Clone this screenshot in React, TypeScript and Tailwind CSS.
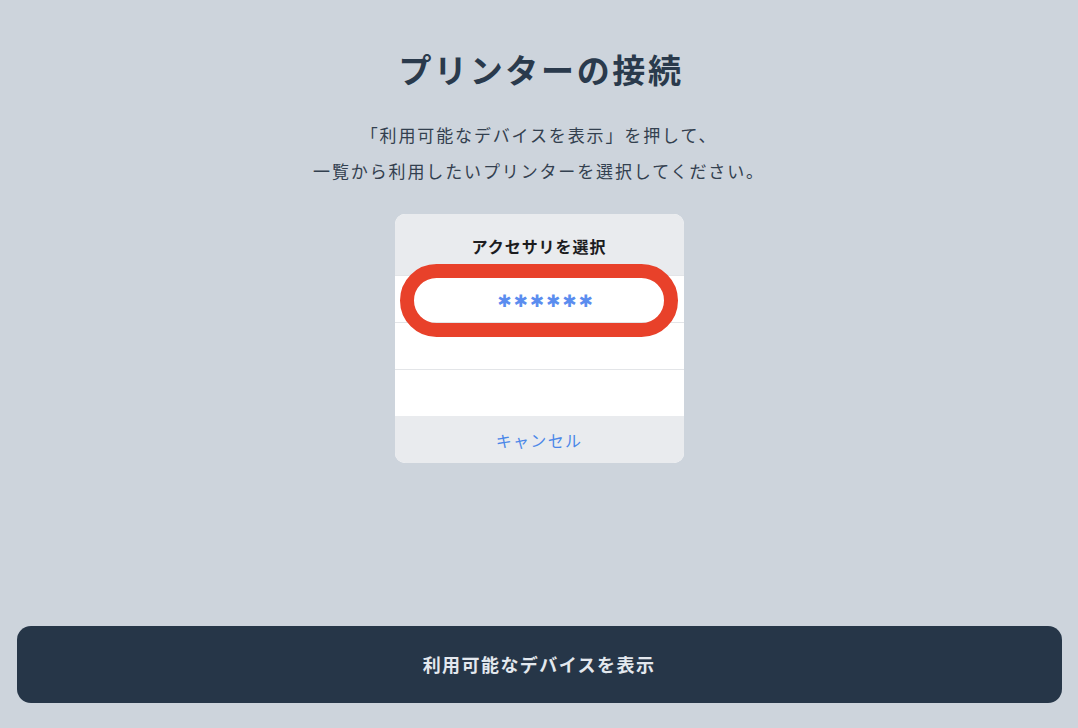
const jp = { fontFamily: '"Noto Sans CJK JP", "Noto Sans", sans-serif' };

export default function App() {
  return (
    <div
      className="w-[1078px] h-[728px] bg-[#cdd4dc] flex flex-col items-center text-[#2a3a4c]"
      style={jp}
    >
      <h1 className="mt-[47px] text-[33px] leading-[44px] font-bold tracking-[0.08em] pl-[4px]">
        プリンターの接続
      </h1>

      <p className="mt-[26px] text-[17px] leading-[36px] tracking-[0.11em] text-center text-[#33404f]">
        「利用可能なデバイスを表示」を押して、
        <br />
        一覧から利用したいプリンターを選択してください。
      </p>

      {/* accessory picker mock */}
      <div className="relative mt-[25px] w-[289px] rounded-[10px] overflow-hidden bg-white">
        <div className="h-[61px] bg-[#e9ebee] flex items-center justify-center pt-[2px]">
          <span className="text-[16px] font-bold tracking-[0.06em] text-[#1c1c1e]">
            アクセサリを選択
          </span>
        </div>
        <div className="h-[47px] border-t border-[#e3e5e8] flex items-center justify-center">
          <span
            className="text-[17px] leading-none tracking-[2px] pl-[14px] text-[#5b8def] mt-[4px]"
            style={{ fontFamily: '"DejaVu Sans", sans-serif' }}
          >
            ✱✱✱✱✱✱
          </span>
        </div>
        <div className="h-[47px] border-t border-[#e3e5e8]" />
        <div className="h-[47px] border-t border-[#e3e5e8]" />
        <div className="h-[47px] bg-[#e9ebee] flex items-center justify-center">
          <span className="text-[16px] tracking-[0.08em] text-[#4b87e8]">キャンセル</span>
        </div>

        {/* highlight ring */}
        <div className="absolute left-[5px] top-[50px] w-[278px] h-[73px] rounded-full border-[14px] border-[#e8412a]" />
      </div>

      <div className="flex-1" />

      <button className="mb-[25px] w-[1045px] h-[77px] rounded-[14px] bg-[#263648] text-[#e3e8ee] text-[18px] font-bold tracking-[0.08em]">
        利用可能なデバイスを表示
      </button>
    </div>
  );
}
